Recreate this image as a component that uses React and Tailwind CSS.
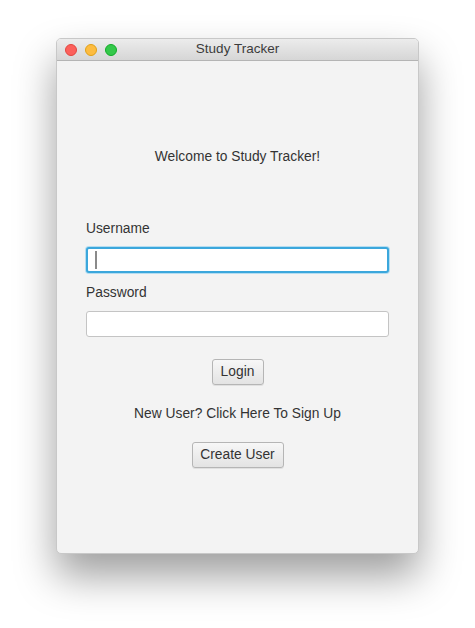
import React, { useState } from 'react';

const Field = ({ label, value, onChange, focused, type = 'text' }) => (
  <div>
    <div className="h-[19px] text-[13.8px] leading-[19px] text-[#333]">{label}</div>
    <div className="relative mt-[9px]">
      <input
        type={type}
        value={value}
        onChange={onChange}
        className={
          'block h-[26px] w-[303px] rounded-[3px] bg-white px-2 text-[13.8px] outline-none ' +
          (focused
            ? 'border-2 border-[#3ba7dc] shadow-[0_0_0_1px_#b4ddf1]'
            : 'border border-[#c4c4c4]')
        }
      />
      {focused && value === '' && (
        <span className="absolute left-[9px] top-[4px] h-[18px] w-[2px] bg-[#8a8a8a]" />
      )}
    </div>
  </div>
);

const MacButton = ({ children, className = '' }) => (
  <button
    className={
      'h-[26px] rounded-[3px] border border-[#b5b5b5] bg-gradient-to-b from-[#f7f7f7] to-[#e3e3e3] text-[13.8px] text-[#333] shadow-[0_1px_0_rgba(0,0,0,0.08)] ' +
      className
    }
  >
    {children}
  </button>
);

const App = () => {
  const [username, setUsername] = useState('');
  const [password, setPassword] = useState('');

  return (
    <div className="h-[628px] w-[475px] bg-white pl-[56px] pt-[38px]" style={{ fontFamily: '"Liberation Sans", Arial, sans-serif' }}>
      <div className="flex h-[516px] w-[363px] flex-col overflow-hidden rounded-[5px] border border-[#c8c8c8] bg-[#f3f3f3] shadow-[0_22px_40px_rgba(0,0,0,0.38)]">
        {/* title bar */}
        <div className="relative flex h-[22px] items-center border-b border-[#b4b4b4] bg-gradient-to-b from-[#ececec] to-[#d6d6d6]">
          <div className="flex gap-[8px] pl-[8px]">
            <span className="h-[12px] w-[12px] rounded-full border border-[#e2463f] bg-[#fc605b]" />
            <span className="h-[12px] w-[12px] rounded-full border border-[#e1a116] bg-[#fdbc40]" />
            <span className="h-[12px] w-[12px] rounded-full border border-[#12ac28] bg-[#34c84a]" />
          </div>
          <div className="absolute inset-0 flex items-center justify-center text-[13.5px] text-[#3c3c3c]">
            Study Tracker
          </div>
        </div>

        {/* content */}
        <div className="flex flex-1 flex-col items-center pt-[86px]">
          <div className="text-[13.8px] leading-[19px] text-[#333]">Welcome to Study Tracker!</div>

          <div className="mt-[53px] flex flex-col gap-[10px]">
            <Field label="Username" value={username} onChange={(e) => setUsername(e.target.value)} focused />
            <Field label="Password" type="password" value={password} onChange={(e) => setPassword(e.target.value)} />
          </div>

          <MacButton className="mt-[22px] w-[52px]">Login</MacButton>

          <div className="mt-[19px] text-[13.8px] leading-[19px] text-[#333]">New User? Click Here To Sign Up</div>

          <MacButton className="mt-[19px] w-[92px]">Create User</MacButton>
        </div>
      </div>
    </div>
  );
};

export default App;
